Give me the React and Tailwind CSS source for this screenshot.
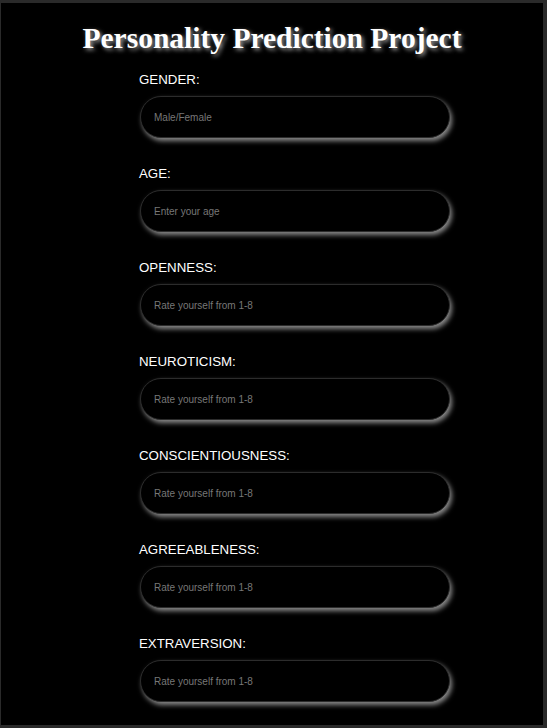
const FIELDS = [
  { label: 'GENDER:', placeholder: 'Male/Female' },
  { label: 'AGE:', placeholder: 'Enter your age' },
  { label: 'OPENNESS:', placeholder: 'Rate yourself from 1-8' },
  { label: 'NEUROTICISM:', placeholder: 'Rate yourself from 1-8' },
  { label: 'CONSCIENTIOUSNESS:', placeholder: 'Rate yourself from 1-8' },
  { label: 'AGREEABLENESS:', placeholder: 'Rate yourself from 1-8' },
  { label: 'EXTRAVERSION:', placeholder: 'Rate yourself from 1-8' },
]

export default function App() {
  return (
    <div className="h-[728px] w-[547px] bg-[#2a2a2a] pt-[3px] pl-[1px] pr-[4px] pb-[3px] overflow-hidden">
      <div className="h-full bg-black pt-[19px]">
        <h1 className="text-center text-white font-bold text-[29.5px] leading-[33px] font-['Liberation_Serif',serif] [text-shadow:2px_2px_4px_#9a9a9a]">
          Personality Prediction Project
        </h1>
        <form className="ml-[138px] mt-[17px] flex flex-col gap-[28px]">
          {FIELDS.map(f => (
            <div key={f.label} className="flex flex-col gap-[8px]">
              <label className="text-white text-[13.3px] leading-[16px] font-['Liberation_Sans',Arial,sans-serif]">
                {f.label}
              </label>
              <input
                type="text"
                placeholder={f.placeholder}
                className="ml-[1px] w-[310px] h-[42px] rounded-full bg-black border border-[#2c2c2c] px-[13px] text-[10px] text-white placeholder:text-[#777] outline-none font-['Liberation_Sans',Arial,sans-serif] shadow-[2px_3px_5px_#8a8a8a]"
              />
            </div>
          ))}
        </form>
      </div>
    </div>
  )
}
